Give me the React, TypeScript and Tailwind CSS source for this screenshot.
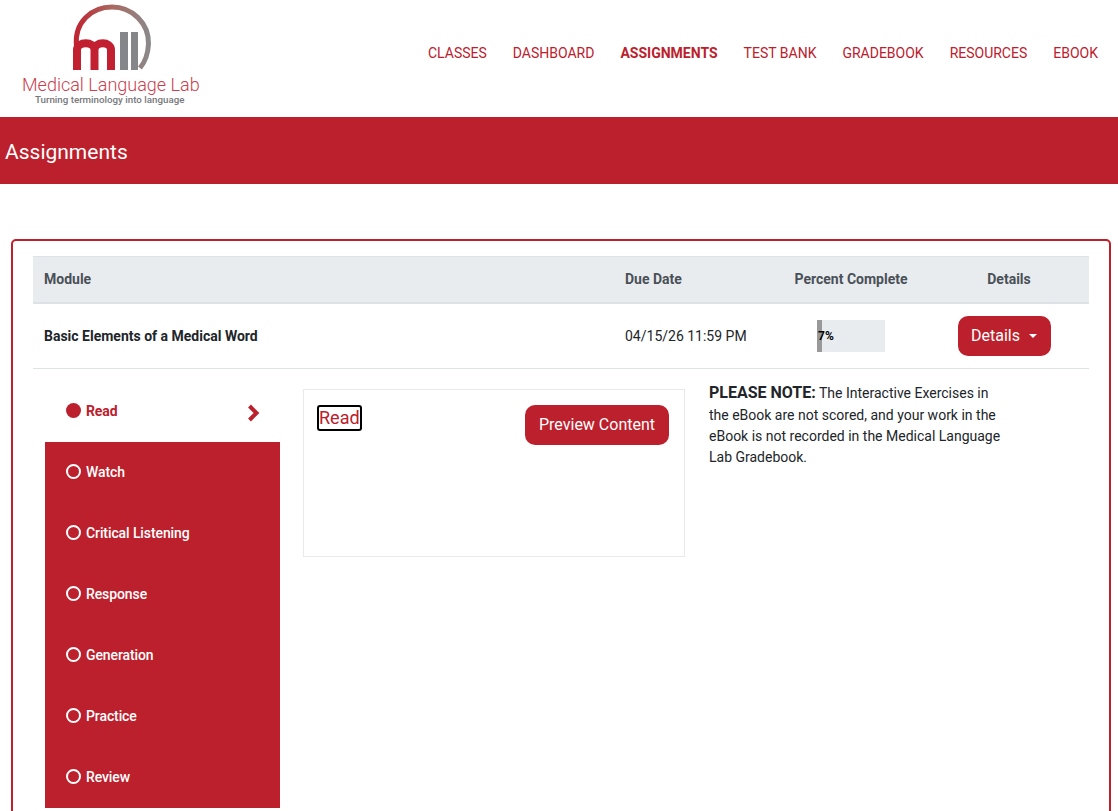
const NAV_ITEMS = ['Classes', 'Dashboard', 'Assignments', 'Test Bank', 'Gradebook', 'Resources', 'eBook'];
const STEPS = ['Watch', 'Critical Listening', 'Response', 'Generation', 'Practice', 'Review'];

const Logo = () => (
  <div className="relative w-[240px] h-[117px] shrink-0">
    <svg className="absolute left-0 top-0" width="240" height="72" viewBox="0 0 240 72" fill="none">
      <defs>
        <linearGradient id="arc" x1="73" y1="0" x2="151" y2="0" gradientUnits="userSpaceOnUse">
          <stop offset="0" stopColor="#c0202f" />
          <stop offset="0.5" stopColor="#a9695f" />
          <stop offset="1" stopColor="#8a8a8c" />
        </linearGradient>
      </defs>
      <path d="M76.500 46C74 22 92 7 112 7C132 7 149 23 148.500 44C148 54 145 62 140 68" stroke="url(#arc)" strokeWidth="5" />
      <path d="M77 70V50C77 41 94.500 41 94.500 50V70M94.500 50C94.500 41 111 41 111 50V70" stroke="#c21f30" strokeWidth="8" />
      <rect x="120" y="32" width="8" height="38" fill="#85868a" />
      <rect x="131" y="32" width="7" height="38" fill="#85868a" />
    </svg>
    <div className="absolute left-[22px] top-[75px] text-[18px] leading-[20px] font-light text-[#c9404c] whitespace-nowrap">
      Medical Language Lab
    </div>
    <div className="absolute left-[35px] top-[94px] text-[9.750px] leading-[11px] font-medium text-[#77787b] whitespace-nowrap">
      Turning terminology into language
    </div>
  </div>
);

const Header = () => (
  <header className="h-[117px] flex justify-between bg-white">
    <Logo />
    <nav className="flex items-start gap-[26px] pr-[20px] pt-[45px]">
      {NAV_ITEMS.map((item) => (
        <a
          key={item}
          className={`text-sm leading-[17px] uppercase text-[#bc202c] ${item === 'Assignments' ? 'font-bold' : ''}`}
        >
          {item}
        </a>
      ))}
    </nav>
  </header>
);

const ModuleTable = () => (
  <div className="text-sm">
    <div className="h-[48px] grid grid-cols-[580px_160px_156px_160px] items-center pb-[2px] bg-[#e9ecef] border-t border-b-2 border-[#dee2e6] font-bold text-[#495057]">
      <div className="pl-[11px]">Module</div>
      <div className="pl-[12px]">Due Date</div>
      <div className="text-center">Percent Complete</div>
      <div className="text-center">Details</div>
    </div>
    <div className="h-[65px] grid grid-cols-[580px_160px_156px_160px] items-center border-b border-[#dee2e6] text-[#212529]">
      <div className="pl-[11px] font-bold">Basic Elements of a Medical Word</div>
      <div className="pl-[12px]">04/15/26 11:59 PM</div>
      <div className="flex justify-center">
        <div className="w-[68px] h-[32px] bg-[#e9ecef] flex items-center relative">
          <div className="w-[5px] h-full bg-[#999999]" />
          <span className="absolute left-[1px] top-[8px] text-xs leading-[16px] font-bold text-black">7%</span>
        </div>
      </div>
      <div className="flex justify-center pr-[10px]">
        <button className="w-[93px] h-[40px] rounded-[10px] bg-[#bc202c] text-white text-base flex items-center justify-center gap-[9px]">
          Details
          <span className="border-x-[4.500px] border-x-transparent border-t-[4.500px] border-t-white" />
        </button>
      </div>
    </div>
  </div>
);

const Sidebar = () => (
  <div className="w-[235px] ml-[12px] mt-[12px] shrink-0 text-sm font-medium tracking-[-0.1px]">
    <div className="h-[61px] flex items-center justify-between pl-[21px] pr-[20px] text-[#bc202c]">
      <div className="flex items-center gap-[5px] -mt-[2px]">
        <span className="w-[15px] h-[15px] rounded-full bg-[#bc202c]" />
        <span className="font-bold">Read</span>
      </div>
      <svg className="mt-[3px]" width="14" height="18" viewBox="0 0 14 18" fill="none">
        <path d="M3.500 2L10.500 9L3.500 16" stroke="currentColor" strokeWidth="4" />
      </svg>
    </div>
    <div className="bg-[#bc202c] text-white">
      {STEPS.map((step) => (
        <div key={step} className="h-[61px] flex items-center gap-[5px] pl-[21px]">
          <span className="w-[15px] h-[15px] rounded-full border-2 border-white -mt-[2px]" />
          <span className="-mt-[2px]">{step}</span>
        </div>
      ))}
    </div>
  </div>
);

const ContentPanel = () => (
  <div className="w-[382px] h-[168px] mt-[20px] ml-[23px] border border-[#e9e9e9] shrink-0 flex justify-between items-start pt-[15px] pl-[13px] pr-[15px]">
    <a className="text-lg leading-[22px] text-[#bc202c] border-2 border-black rounded-[3px]">Read</a>
    <button className="w-[144px] h-[40px] rounded-[10px] bg-[#bc202c] text-white text-base">Preview Content</button>
  </div>
);

const Note = () => (
  <p className="w-[300px] ml-[24px] mt-[12px] text-sm leading-[21px] text-[#212529]">
    <span className="text-base font-bold">PLEASE NOTE:</span> The Interactive Exercises in the eBook are not scored, and
    your work in the eBook is not recorded in the Medical Language Lab Gradebook.
  </p>
);

export default function App() {
  return (
    <div className="h-screen overflow-hidden bg-white font-['Roboto',sans-serif]">
      <Header />
      <div className="h-[67px] bg-[#bc202c] flex items-center pl-[5px] pt-[4px] text-[21px] text-white">Assignments</div>
      <main className="mt-[55px] mx-[11px] w-[1100px] border-2 border-[#bc202c] rounded-[5px] px-[20px] pt-[15px] pb-[20px]">
        <ModuleTable />
        <div className="flex items-start">
          <Sidebar />
          <ContentPanel />
          <Note />
        </div>
      </main>
    </div>
  );
}
